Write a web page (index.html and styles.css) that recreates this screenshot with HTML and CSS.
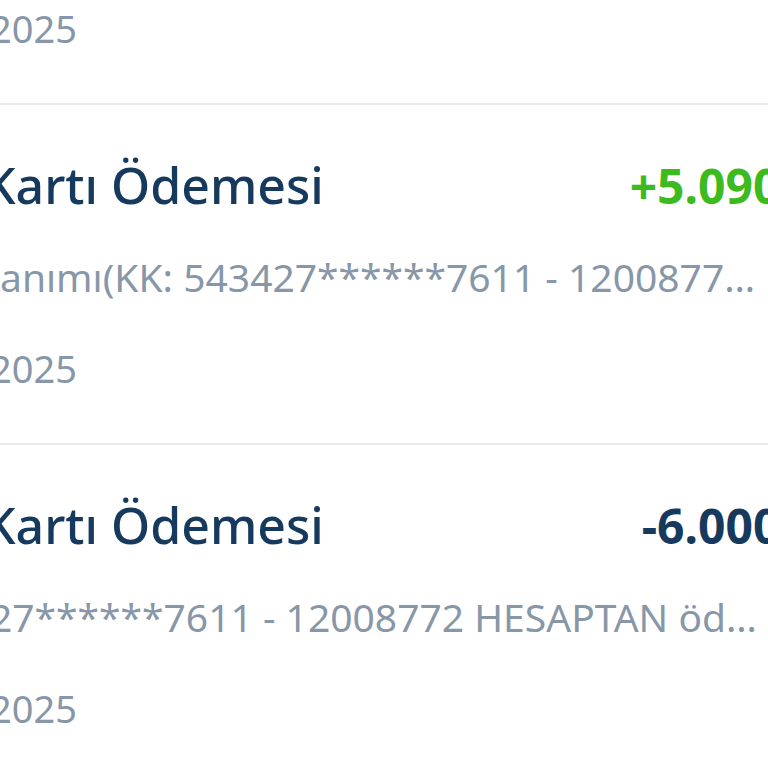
FILE: index.html
```html
<!DOCTYPE html>
<html lang="tr">
<head>
    <meta charset="UTF-8">
    <meta name="viewport" content="width=device-width, initial-scale=1.0">
    <title>Hesap Hareketleri</title>
    <link rel="stylesheet" href="styles.css">
</head>
<body>
    <div class="list">
        <div class="row">
            <div class="row-top">
                <span class="title">Kartı Ödemesi</span>
                <span class="amount">-1.250,00 TL</span>
            </div>
            <p class="desc">lanımı(KK: 543427******7611 - 12008772 HESAPTAN ödeme)</p>
            <p class="date">2025</p>
        </div>
        <div class="row">
            <div class="row-top">
                <span class="title">Kartı Ödemesi</span>
                <span class="amount plus">+5.090,00 TL</span>
            </div>
            <p class="desc">lanımı(KK: 543427******7611 - 12008772 HESAPTAN ödeme)</p>
            <p class="date">2025</p>
        </div>
        <div class="row">
            <div class="row-top">
                <span class="title">Kartı Ödemesi</span>
                <span class="amount">-6.000,00 TL</span>
            </div>
            <p class="desc">27******7611 - 12008772 HESAPTAN ödeme</p>
            <p class="date">2025</p>
        </div>
    </div>
</body>
</html>
```

FILE: styles.css
```css
html, body { margin: 0; padding: 0; background: #ffffff; overflow: hidden; height: 768px; }
body { font-family: "Noto Sans", "Open Sans", sans-serif; }

/* list is wider than the screen, left and right edges fall outside */
.list { width: 924px; margin-left: -10px; margin-top: -235px; }
.row { padding: 52px 0 52px 0; border-bottom: 2px solid #e9ecef; }
.row-top { display: flex; justify-content: space-between; align-items: baseline; height: 56px; }
.title { margin-left: -6px; font-size: 50px; line-height: 56px; font-weight: 500; color: #163a5e; white-space: nowrap; }
.amount { margin-right: -2px; font-size: 48px; line-height: 56px; font-weight: 700; color: #163a5e; white-space: nowrap; }
.amount.plus { color: #3dba1f; }
.desc { width: 770px; margin: 41px 0 0 0; font-size: 39px; line-height: 46px; color: #8797a8; white-space: nowrap; overflow: hidden; text-overflow: ellipsis; }
.date { margin: 45px 0 0 0; font-size: 38px; line-height: 46px; color: #8797a8; }
```
